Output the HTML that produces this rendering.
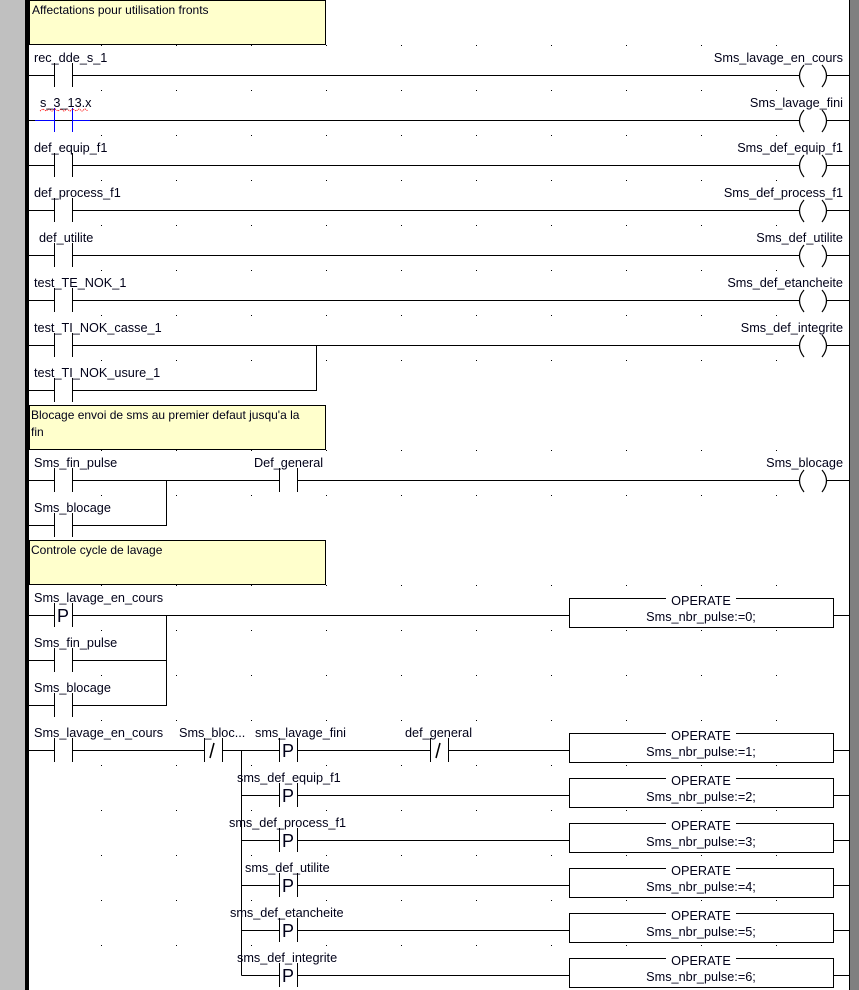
<!DOCTYPE html>
<html><head><meta charset="utf-8"><style>
html,body{margin:0;padding:0;background:#fff;overflow:hidden}
svg{display:block}
text{font-family:"Liberation Sans",Arial,sans-serif;font-size:12.7px;fill:#000018}
.c{font-size:12px}
.p{font-size:18px}
</style></head><body>
<svg width="859" height="990" xmlns="http://www.w3.org/2000/svg" shape-rendering="crispEdges">
<rect x="0" y="0" width="25" height="990" fill="#c0c0c0"/>
<rect x="25" y="0" width="4" height="990" fill="#000"/>
<rect x="849" y="0" width="10" height="990" fill="#808080"/>
<rect x="849" y="0" width="1" height="990" fill="#000"/>
<g stroke="#000" stroke-width="1" fill="none">
<path d="M29 75.5H849M29 120.5H849M29 165.5H849M29 210.5H849M29 255.5H849M29 300.5H849M29 345.5H849M29 390.5H316.5V345M29 480.5H849M29 525.5H166.5V480M29 615.5H569M833 615.5H849M29 660.5H166.5V615M29 705.5H166.5V660M29 750.5H569M833 750.5H849M241.5 750V975.5M241.5 795.5H569M833 795.5H849M241.5 840.5H569M833 840.5H849M241.5 885.5H569M833 885.5H849M241.5 930.5H569M833 930.5H849M241.5 975.5H569M833 975.5H849"/>
</g>
<rect x="29.5" y="0.5" width="296" height="44" fill="#ffffcc" stroke="#000"/>
<rect x="29.5" y="405.5" width="296" height="44" fill="#ffffcc" stroke="#000"/>
<rect x="29.5" y="540.5" width="296" height="44" fill="#ffffcc" stroke="#000"/>
<text class="c" x="32" y="14">Affectations pour utilisation fronts</text>
<text class="c" x="31" y="419">Blocage envoi de sms au premier defaut jusqu'a la</text>
<text class="c" x="31" y="436">fin</text>
<text class="c" x="31" y="554">Controle cycle de lavage</text>
<g stroke="#000" fill="#fff">
<g id="ct">
<rect x="55" y="63" width="17" height="24" stroke="none"/>
<path d="M54.5 63V87M72.5 63V87" fill="none"/>
</g>
<use href="#ct" y="90"/><use href="#ct" y="135"/><use href="#ct" y="180"/><use href="#ct" y="225"/><use href="#ct" y="270"/><use href="#ct" y="315"/>
<use href="#ct" y="405"/><use href="#ct" y="450"/><use href="#ct" y="540"/><use href="#ct" y="585"/><use href="#ct" y="630"/><use href="#ct" y="675"/>
<use href="#ct" x="225" y="405"/>
<use href="#ct" x="150" y="675"/><use href="#ct" x="225" y="675"/><use href="#ct" x="376" y="675"/>
<use href="#ct" x="225" y="720"/><use href="#ct" x="225" y="765"/><use href="#ct" x="225" y="810"/><use href="#ct" x="225" y="855"/><use href="#ct" x="225" y="900"/>
</g>
<path d="M35 120.5H54M73 120.5H90M54.5 108V132M72.5 108V132" stroke="#0000ff"/>
<path d="M40 111l3 -2 3 2 3 -2 3 2 3 -2 3 2 3 -2 3 2 3 -2 3 2 3 -2 3 2 3 -2 3 2 3 -2 3 2" stroke="#ff0000" stroke-dasharray="1 1" fill="none" shape-rendering="auto"/>
<text class="p" x="57" y="622">P</text>
<text class="p" x="282" y="757">P</text>
<text class="p" x="282" y="802">P</text>
<text class="p" x="282" y="847">P</text>
<text class="p" x="282" y="892">P</text>
<text class="p" x="282" y="937">P</text>
<text class="p" x="282" y="982">P</text>
<path d="M210 758L214 743M436 758L440 743" stroke="#000" stroke-width="1.5" shape-rendering="auto"/>
<g id="cl" stroke="#000" fill="none" shape-rendering="auto">
<rect x="799" y="64" width="28" height="24" fill="#fff" stroke="none"/>
<path d="M804 65Q795 75.5 804 87M822 65Q831 75.5 822 87" stroke-width="1.2"/>
</g>
<use href="#cl" y="45"/><use href="#cl" y="90"/><use href="#cl" y="135"/><use href="#cl" y="180"/><use href="#cl" y="225"/><use href="#cl" y="270"/><use href="#cl" y="405"/>
<g id="op">
<rect x="569.5" y="598.5" width="264" height="29" fill="#fff" stroke="#000"/>
<rect x="666" y="594" width="70" height="10" fill="#fff"/>
<text x="701" y="605" text-anchor="middle">OPERATE</text>
</g>
<text x="701" y="621" text-anchor="middle">Sms_nbr_pulse:=0;</text>
<use href="#op" y="135"/><text x="701" y="756" text-anchor="middle">Sms_nbr_pulse:=1;</text>
<use href="#op" y="180"/><text x="701" y="801" text-anchor="middle">Sms_nbr_pulse:=2;</text>
<use href="#op" y="225"/><text x="701" y="846" text-anchor="middle">Sms_nbr_pulse:=3;</text>
<use href="#op" y="270"/><text x="701" y="891" text-anchor="middle">Sms_nbr_pulse:=4;</text>
<use href="#op" y="315"/><text x="701" y="936" text-anchor="middle">Sms_nbr_pulse:=5;</text>
<use href="#op" y="360"/><text x="701" y="981" text-anchor="middle">Sms_nbr_pulse:=6;</text>
<text x="34" y="62">rec_dde_s_1</text>
<text x="40" y="107">s_3_13.x</text>
<text x="34" y="152">def_equip_f1</text>
<text x="34" y="197">def_process_f1</text>
<text x="39" y="242">def_utilite</text>
<text x="34" y="287">test_TE_NOK_1</text>
<text x="34" y="332">test_TI_NOK_casse_1</text>
<text x="34" y="377">test_TI_NOK_usure_1</text>
<text x="34" y="467">Sms_fin_pulse</text>
<text x="254" y="467">Def_general</text>
<text x="34" y="512">Sms_blocage</text>
<text x="34" y="602">Sms_lavage_en_cours</text>
<text x="34" y="647">Sms_fin_pulse</text>
<text x="34" y="692">Sms_blocage</text>
<text x="34" y="737">Sms_lavage_en_cours</text>
<text x="179" y="737">Sms_bloc...</text>
<text x="255" y="737">sms_lavage_fini</text>
<text x="405" y="737">def_general</text>
<text x="237" y="782">sms_def_equip_f1</text>
<text x="229" y="827">sms_def_process_f1</text>
<text x="245" y="872">sms_def_utilite</text>
<text x="230" y="917">sms_def_etancheite</text>
<text x="237" y="962">sms_def_integrite</text>
<g text-anchor="end">
<text x="843" y="62">Sms_lavage_en_cours</text>
<text x="843" y="107">Sms_lavage_fini</text>
<text x="843" y="152">Sms_def_equip_f1</text>
<text x="843" y="197">Sms_def_process_f1</text>
<text x="843" y="242">Sms_def_utilite</text>
<text x="843" y="287">Sms_def_etancheite</text>
<text x="843" y="332">Sms_def_integrite</text>
<text x="843" y="467">Sms_blocage</text>
</g>
<defs><g id="dr" fill="#000"><rect x="101" y="0" width="1" height="1"/><rect x="176" y="0" width="1" height="1"/><rect x="251" y="0" width="1" height="1"/><rect x="326" y="0" width="1" height="1"/><rect x="401" y="0" width="1" height="1"/><rect x="476" y="0" width="1" height="1"/><rect x="551" y="0" width="1" height="1"/><rect x="626" y="0" width="1" height="1"/><rect x="701" y="0" width="1" height="1"/><rect x="776" y="0" width="1" height="1"/></g></defs>
<use href="#dr" y="45"/><use href="#dr" y="90"/><use href="#dr" y="135"/><use href="#dr" y="180"/><use href="#dr" y="225"/><use href="#dr" y="270"/><use href="#dr" y="315"/><use href="#dr" y="360"/><use href="#dr" y="450"/><use href="#dr" y="495"/><use href="#dr" y="585"/><use href="#dr" y="630"/><use href="#dr" y="675"/><use href="#dr" y="720"/><use href="#dr" y="765"/><use href="#dr" y="810"/><use href="#dr" y="855"/><use href="#dr" y="900"/><use href="#dr" y="945"/>
</svg>
</body></html>
